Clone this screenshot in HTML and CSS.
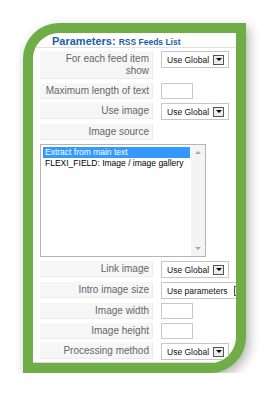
FILE: index.html
```html
<!DOCTYPE html>
<html>
  <head>
    <title>Parameters: RSS Feeds List</title>
    <meta charset="utf-8" />
    <link rel="stylesheet" href="styles.css">
  </head>

  <body>
    <div class="frame">
      <div class="panel">
        <h3 class="title">Parameters: <small>RSS Feeds List</small></h3>

        <div class="paramlist">
          <div class="key">For each feed item<br>show</div>
          <div class="value"><span class="select">Use Global<i></i></span></div>

          <div class="key">Maximum length of text</div>
          <div class="value"><input class="text" type="text" /></div>

          <div class="key">Use image</div>
          <div class="value"><span class="select">Use Global<i></i></span></div>

          <div class="key">Image source</div>
          <div class="value"></div>

          <div class="listbox">
            <ul>
              <li class="selected">Extract from main text</li>
              <li>FLEXI_FIELD: Image / image gallery</li>
            </ul>
            <div class="scrollbar"><b class="up"></b><b class="down"></b></div>
          </div>

          <div class="key">Link image</div>
          <div class="value"><span class="select">Use Global<i></i></span></div>

          <div class="key">Intro image size</div>
          <div class="value"><span class="select wide">Use parameters<i></i></span></div>

          <div class="key">Image width</div>
          <div class="value"><input class="text" type="text" /></div>

          <div class="key">Image height</div>
          <div class="value"><input class="text" type="text" /></div>

          <div class="key">Processing method</div>
          <div class="value"><span class="select">Use Global<i></i></span></div>
        </div>
      </div>
    </div>
  </body>
</html>
```

FILE: styles.css
```css
body {
  margin: 0;
  background: #fff;
  font-family: "Liberation Sans", Arial, Helvetica, sans-serif;
}
.frame {
  box-sizing: border-box;
  display: flex;
  flex-direction: column;
  width: 223px;
  height: 350px;
  margin: 23px 0 0 23px;
  border: 10px solid #70ad47;
  border-radius: 36px 0 36px 0;
  background: #fff;
  box-shadow: 3px 4px 12px rgba(0, 0, 0, 0.3);
  overflow: hidden;
}
.panel {
  flex: 1;
  border-bottom: 1px solid #d8d8d8;
}
.title {
  margin: 0;
  padding-left: 19px;
  height: 14px;
  line-height: 16px;
  border-bottom: 1px solid #e0e0e0;
  color: #1b5dab;
  font-size: 11px;
  font-weight: bold;
  white-space: nowrap;
}
.title small {
  font-size: 8.5px;
}
.paramlist {
  display: grid;
  grid-template-columns: 113px auto;
  column-gap: 8px;
  row-gap: 4px;
  align-items: start;
  padding: 3px 0 0 7px;
}
.key {
  box-sizing: border-box;
  min-height: 16px;
  padding: 2px 3px 1px 0;
  background: #f6f6f6;
  border-bottom: 1px solid #ebebeb;
  border-right: 1px solid #ebebeb;
  color: #666;
  font-size: 10px;
  line-height: 12px;
  text-align: right;
}
.value {
  min-width: 0;
}
.select {
  box-sizing: border-box;
  display: flex;
  align-items: center;
  width: 68px;
  height: 17px;
  padding: 0 4px 0 5px;
  border: 1px solid #c5c5c5;
  background: #fff;
  color: #111;
  font-size: 8.5px;
  white-space: nowrap;
}
.select.wide {
  width: 89px;
}
.select i {
  box-sizing: border-box;
  display: flex;
  align-items: center;
  justify-content: center;
  margin-left: auto;
  width: 11px;
  height: 10px;
  border: 1px solid #555;
  background: #ececec;
}
.select i:after {
  content: "";
  width: 0;
  height: 0;
  border-left: 3px solid transparent;
  border-right: 3px solid transparent;
  border-top: 3px solid #000;
}
.text {
  box-sizing: border-box;
  display: block;
  width: 32px;
  height: 16px;
  margin: 0;
  padding: 0;
  border: 1px solid #c8c8c8;
  background: #fff;
}
.listbox {
  grid-column: 1 / -1;
  box-sizing: border-box;
  display: flex;
  width: 166px;
  height: 113px;
  border: 1px solid #b4b4b4;
  background: #fff;
  color: #000;
  font-size: 8.5px;
}
.listbox ul {
  flex: 1;
  margin: 0;
  padding: 2px 0 0 2px;
  list-style: none;
}
.listbox li {
  padding-left: 2px;
  line-height: 10.5px;
  white-space: nowrap;
}
.listbox li.selected {
  background: #3399ff;
  color: #fff;
}
.scrollbar {
  display: flex;
  flex-direction: column;
  justify-content: space-between;
  align-items: center;
  width: 14px;
  margin-left: 1px;
  padding: 6px 0;
  box-sizing: border-box;
  background: #f4f4f4;
}
.scrollbar b {
  width: 0;
  height: 0;
  border-left: 3px solid transparent;
  border-right: 3px solid transparent;
}
.scrollbar .up {
  border-bottom: 3px solid #a8a8a8;
}
.scrollbar .down {
  border-top: 3px solid #a8a8a8;
}
```
